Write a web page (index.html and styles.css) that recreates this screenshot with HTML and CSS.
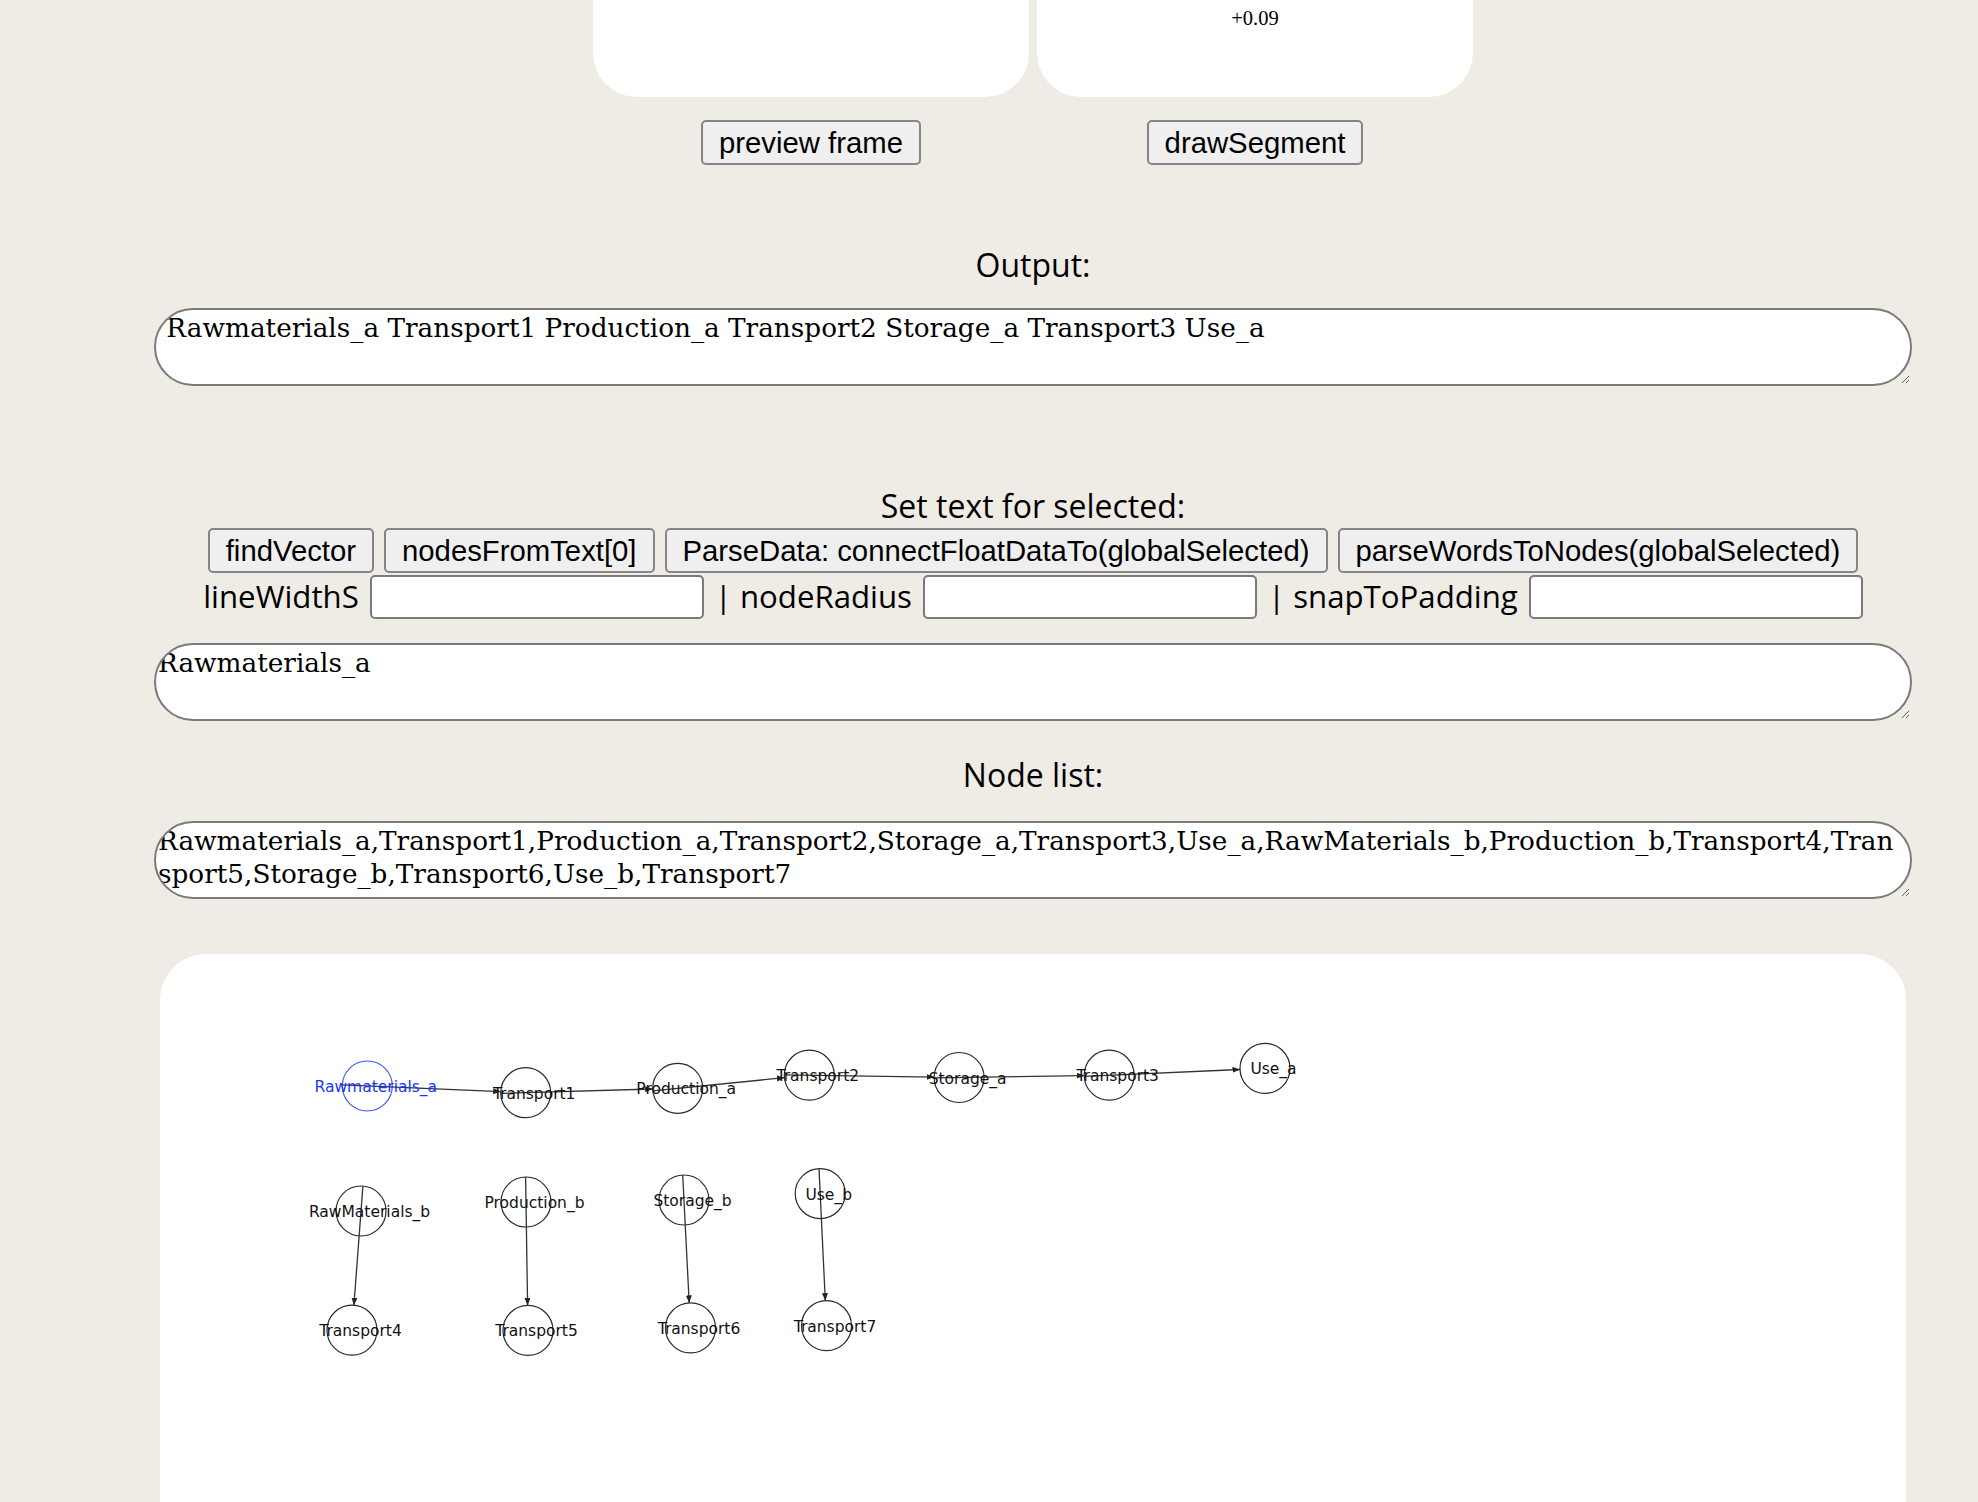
FILE: index.html
```html
<!DOCTYPE html>
<html>
<head>
<meta charset="utf-8">
<title>Node editor</title>
<link rel="stylesheet" href="styles.css">
</head>
<body>
<div class="page">
  <div class="cards">
    <div class="card"></div>
    <div class="card"><span class="delta">+0.09</span></div>
  </div>
  <div class="card-actions">
    <div class="action"><button class="btn">preview frame</button></div>
    <div class="action"><button class="btn">drawSegment</button></div>
  </div>

  <div class="label label-output">Output:</div>
  <textarea class="box"> Rawmaterials_a Transport1 Production_a Transport2 Storage_a Transport3 Use_a</textarea>

  <div class="label label-set">Set text for selected:</div>
  <div class="tools">
    <button class="btn">findVector</button>
    <button class="btn">nodesFromText[0]</button>
    <button class="btn">ParseData: connectFloatDataTo(globalSelected)</button>
    <button class="btn">parseWordsToNodes(globalSelected)</button>
  </div>
  <div class="fields">
    <span class="field-label">lineWidthS</span><input class="field" type="text">
    <span class="field-label">| nodeRadius</span><input class="field" type="text">
    <span class="field-label">| snapToPadding</span><input class="field" type="text">
  </div>
  <textarea class="box box-sel">Rawmaterials_a</textarea>

  <div class="label label-nodes">Node list:</div>
  <textarea class="box box-list">Rawmaterials_a,Transport1,Production_a,Transport2,Storage_a,Transport3,Use_a,RawMaterials_b,Production_b,Transport4,Tran
sport5,Storage_b,Transport6,Use_b,Transport7</textarea>

  <div class="canvas-card">
    <svg class="graph" width="1746" height="560" viewBox="160 954 1746 560" xmlns="http://www.w3.org/2000/svg">
      <defs>
        <marker id="arrow" markerUnits="userSpaceOnUse" markerWidth="8" markerHeight="7" refX="7.5" refY="3" orient="auto">
          <path d="M0,0 L7.5,3 L0,6 Z" fill="#222"/>
        </marker>
      </defs>
      <g class="nodes">
        <circle class="node sel" cx="367.3" cy="1086" r="25"/>
        <circle class="node" cx="525.7" cy="1092.7" r="25"/>
        <circle class="node" cx="677.7" cy="1088.3" r="25"/>
        <circle class="node" cx="809.3" cy="1075.2" r="25"/>
        <circle class="node" cx="959.1" cy="1077.5" r="25"/>
        <circle class="node" cx="1109.2" cy="1075.2" r="25"/>
        <circle class="node" cx="1265" cy="1068.4" r="25"/>
        <circle class="node" cx="361" cy="1211" r="25"/>
        <circle class="node" cx="526" cy="1202" r="25"/>
        <circle class="node" cx="684" cy="1200" r="25"/>
        <circle class="node" cx="820.2" cy="1193.6" r="25"/>
        <circle class="node" cx="352" cy="1330.2" r="25"/>
        <circle class="node" cx="528" cy="1330.4" r="25"/>
        <circle class="node" cx="690.5" cy="1327.9" r="25"/>
        <circle class="node" cx="826.5" cy="1325.7" r="25"/>
      </g>
      <g class="edges">
        <line x1="342.3" y1="1084.9" x2="500.7" y2="1091.6" marker-end="url(#arrow)"/>
        <line x1="500.7" y1="1093.4" x2="652.7" y2="1089.0" marker-end="url(#arrow)"/>
        <line x1="652.8" y1="1090.8" x2="784.4" y2="1077.7" marker-end="url(#arrow)"/>
        <line x1="784.3" y1="1074.8" x2="934.1" y2="1077.1" marker-end="url(#arrow)"/>
        <line x1="934.1" y1="1077.9" x2="1084.2" y2="1075.6" marker-end="url(#arrow)"/>
        <line x1="1084.2" y1="1076.3" x2="1240.0" y2="1069.5" marker-end="url(#arrow)"/>
        <line x1="362.9" y1="1186.1" x2="353.9" y2="1305.3" marker-end="url(#arrow)"/>
        <line x1="525.6" y1="1177.0" x2="527.6" y2="1305.4" marker-end="url(#arrow)"/>
        <line x1="682.7" y1="1175.0" x2="689.2" y2="1302.9" marker-end="url(#arrow)"/>
        <line x1="819.0" y1="1168.6" x2="825.3" y2="1300.7" marker-end="url(#arrow)"/>
      </g>
      <g class="labels">
        <text class="sel-label" x="375.8" y="1092">Rawmaterials_a</text>
        <text x="534.2" y="1098.7">Transport1</text>
        <text x="686.2" y="1094.3">Production_a</text>
        <text x="817.8" y="1081.2">Transport2</text>
        <text x="967.6" y="1083.5">Storage_a</text>
        <text x="1117.7" y="1081.2">Transport3</text>
        <text x="1273.5" y="1074.4">Use_a</text>
        <text x="369.5" y="1217">RawMaterials_b</text>
        <text x="534.5" y="1208">Production_b</text>
        <text x="692.5" y="1206">Storage_b</text>
        <text x="828.7" y="1199.6">Use_b</text>
        <text x="360.5" y="1336.2">Transport4</text>
        <text x="536.5" y="1336.4">Transport5</text>
        <text x="699" y="1333.9">Transport6</text>
        <text x="835" y="1331.7">Transport7</text>
      </g>
    </svg>
  </div>
</div>
</body>
</html>
```

FILE: styles.css
```css
html, body {
  margin: 0;
  padding: 0;
}

body {
  background: #efebe5;
  font-family: "Open Sans", "Noto Sans", sans-serif;
  color: #000;
  overflow: hidden;
}

.page {
  width: 1758px;
  margin-left: 154px;
}

/* top preview cards (scrolled, only their bottoms are visible) */
.cards {
  display: flex;
  justify-content: center;
  gap: 8px;
}

.card {
  width: 436px;
  height: 97px;
  background: #fff;
  border-radius: 0 0 44px 44px;
  display: flex;
  justify-content: center;
  align-items: flex-start;
}

.delta {
  font-family: "Liberation Serif", "Times New Roman", serif;
  font-size: 20.5px;
  line-height: 24px;
  padding-top: 6px;
}

.card-actions {
  display: flex;
  justify-content: center;
  gap: 8px;
  margin-top: 23px;
}

.action {
  width: 436px;
  display: flex;
  justify-content: center;
}

.btn {
  font-family: "Liberation Sans", Arial, sans-serif;
  font-size: 29.3px;
  line-height: 33px;
  height: 45px;
  padding: 4px 16px;
  box-sizing: border-box;
  background: #efefef;
  color: #000;
  border: 2px solid #858585;
  border-radius: 5px;
  margin: 0;
}

.label {
  text-align: center;
  font-size: 32px;
  line-height: 42px;
}

.label-output { margin-top: 79px; }
.label-set { margin-top: 99px; }
.label-nodes { margin-top: 33px; }

.box {
  display: block;
  width: 1758px;
  height: 78px;
  box-sizing: border-box;
  margin: 22px 0 0 0;
  padding: 2px;
  border: 2px solid #7a7a7a;
  border-radius: 40px;
  background: #fff;
  color: #000;
  font-family: "DejaVu Serif", "Liberation Serif", serif;
  font-size: 26.3px;
  line-height: 33px;
  overflow: hidden;
}

.box-sel { margin-top: 24px; }
.box-list { margin-top: 25px; }

.tools {
  display: flex;
  justify-content: center;
  gap: 10px;
  margin-top: 1px;
}

.fields {
  display: flex;
  justify-content: center;
  align-items: center;
  gap: 11px;
  margin-top: 1px;
  height: 45px;
}

.field-label {
  font-size: 31.2px;
  line-height: 41px;
}

.field {
  width: 334px;
  height: 44px;
  box-sizing: border-box;
  border: 2px solid #7a7a7a;
  border-radius: 5px;
  background: #fff;
  margin: 0;
  padding: 2px 4px;
}

.canvas-card {
  margin-top: 55px;
  width: 1746px;
  margin-left: 6px;
  height: 600px;
  background: #fff;
  border-radius: 46px 46px 0 0;
  overflow: hidden;
}

.graph {
  display: block;
}

.node {
  fill: none;
  stroke: #2a2a2a;
  stroke-width: 1.2;
}

.node.sel {
  stroke: #3f5cff;
}

.edges line {
  stroke: #333;
  stroke-width: 1.3;
}

.labels text {
  font-family: "DejaVu Sans", Verdana, sans-serif;
  font-size: 15.5px;
  text-anchor: middle;
  fill: #111;
}

.labels .sel-label {
  fill: #2036f2;
}
```
